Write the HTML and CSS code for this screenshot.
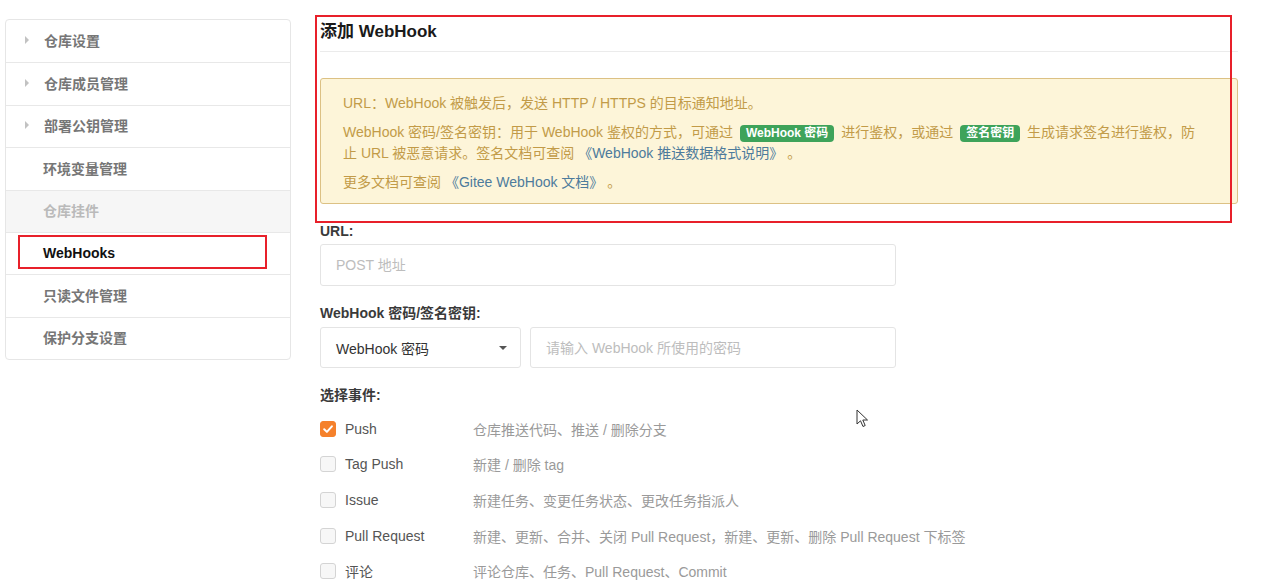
FILE: index.html
```html
<!DOCTYPE html>
<html lang="zh-CN">
<head>
    <meta charset="UTF-8">
    <title>添加 WebHook</title>
    <link rel="stylesheet" href="styles.css">
</head>
<body>
    <div class="page">
        <ul class="side-nav">
            <li class="nav-item"><span class="caret"></span>仓库设置</li>
            <li class="nav-item"><span class="caret"></span>仓库成员管理</li>
            <li class="nav-item"><span class="caret"></span>部署公钥管理</li>
            <li class="nav-item plain">环境变量管理</li>
            <li class="nav-item plain disabled">仓库挂件</li>
            <li class="nav-item plain active">WebHooks</li>
            <li class="nav-item plain">只读文件管理</li>
            <li class="nav-item plain">保护分支设置</li>
        </ul>

        <div class="main">
            <h2 class="page-title">添加 WebHook</h2>

            <div class="notice">
                <p>URL：WebHook 被触发后，发送 HTTP / HTTPS 的目标通知地址。</p>
                <p>WebHook 密码/签名密钥：用于 WebHook 鉴权的方式，可通过 <span class="badge">WebHook 密码</span> 进行鉴权，或通过 <span class="badge">签名密钥</span> 生成请求签名进行鉴权，防止 URL 被恶意请求。签名文档可查阅 <a href="#">《WebHook 推送数据格式说明》</a> 。</p>
                <p>更多文档可查阅 <a href="#">《Gitee WebHook 文档》</a> 。</p>
            </div>

            <div class="field">
                <label class="field-label">URL:</label>
                <input class="text-input url-input" type="text" placeholder="POST 地址">
            </div>

            <div class="field">
                <label class="field-label">WebHook 密码/签名密钥:</label>
                <div class="field-row">
                    <div class="select">WebHook 密码<span class="select-caret"></span></div>
                    <input class="text-input secret-input" type="text" placeholder="请输入 WebHook 所使用的密码">
                </div>
            </div>

            <div class="field">
                <label class="field-label">选择事件:</label>
                <div class="events">
                    <div class="event">
                        <span class="check checked">
                            <svg width="12" height="12" viewBox="0 0 12 12"><path d="M2.2 6.3 L4.9 8.9 L9.9 3.3" fill="none" stroke="#fff" stroke-width="2" stroke-linecap="round" stroke-linejoin="round"/></svg>
                        </span>
                        <span class="event-name">Push</span>
                        <span class="event-desc">仓库推送代码、推送 / 删除分支</span>
                    </div>
                    <div class="event">
                        <span class="check"></span>
                        <span class="event-name">Tag Push</span>
                        <span class="event-desc">新建 / 删除 tag</span>
                    </div>
                    <div class="event">
                        <span class="check"></span>
                        <span class="event-name">Issue</span>
                        <span class="event-desc">新建任务、变更任务状态、更改任务指派人</span>
                    </div>
                    <div class="event">
                        <span class="check"></span>
                        <span class="event-name">Pull Request</span>
                        <span class="event-desc">新建、更新、合并、关闭 Pull Request，新建、更新、删除 Pull Request 下标签</span>
                    </div>
                    <div class="event">
                        <span class="check"></span>
                        <span class="event-name">评论</span>
                        <span class="event-desc">评论仓库、任务、Pull Request、Commit</span>
                    </div>
                </div>
            </div>
        </div>
    </div>

    <!-- annotation marks drawn over the screenshot -->
    <div class="mark mark-main"></div>
    <div class="mark mark-nav"></div>
    <svg class="cursor" width="14" height="20" viewBox="0 0 14 20">
        <path d="M1 1 L1 15 L4.5 11.8 L7 17.5 L9.2 16.5 L6.8 11 L11.5 11 Z" fill="#fff" stroke="#333" stroke-width="1" stroke-linejoin="round"/>
    </svg>
</body>
</html>
```

FILE: styles.css
```css
body {
    margin: 0;
    background: #fff;
    font-family: "Liberation Sans", "Noto Sans CJK SC", sans-serif;
    font-size: 14px;
    color: #333;
}
.page {
    display: flex;
    align-items: flex-start;
    padding: 19px 0 0 5px;
}

/* side nav */
.side-nav {
    list-style: none;
    margin: 0;
    padding: 0;
    width: 286px;
    flex-shrink: 0;
    border: 1px solid #e6e6e6;
    border-radius: 4px;
    box-sizing: border-box;
    margin-right: 29px;
}
.nav-item {
    display: flex;
    align-items: center;
    height: 42.4px;
    box-sizing: border-box;
    padding-left: 19px;
    padding-bottom: 2px;
    color: #767676;
    font-weight: bold;
    border-top: 1px solid #e8e8e8;
}
.nav-item:first-child { border-top: none; }
.nav-item.plain { padding-left: 37px; }
.nav-item.disabled { background: #f6f6f6; color: #bababa; }
.nav-item.active { color: #111; }
.caret {
    width: 0;
    height: 0;
    border-top: 4px solid transparent;
    border-bottom: 4px solid transparent;
    border-left: 4px solid #c2c2c2;
    margin-right: 15px;
}

/* main column */
.main {
    width: 918px;
}
.page-title {
    margin: 0;
    padding: 1px 0 7px;
    font-size: 17px;
    line-height: 24px;
    color: #1a1a1a;
    border-bottom: 1px solid #ebebeb;
}
.notice {
    margin-top: 26px;
    background: #fdf5d9;
    border: 1px solid #dcc184;
    border-radius: 3px;
    padding: 14px 32px 10px 22px;
    color: #c29b48;
    line-height: 21px;
}
.notice p { margin: 0 0 8px; }
.notice p:last-child { margin-bottom: 0; }
.notice a { color: #4d7b9c; text-decoration: none; }
.badge {
    display: inline-block;
    background: #3ea35a;
    color: #fff;
    font-size: 12px;
    font-weight: bold;
    line-height: 17px;
    padding: 0 6px;
    margin: 0 3px;
    border-radius: 4px;
}

/* form */
.field { margin-top: 17px; }
.field-label {
    display: block;
    font-weight: bold;
    line-height: 20px;
    margin-bottom: 3px;
    color: #3a3a3a;
}
.text-input {
    box-sizing: border-box;
    height: 42px;
    border: 1px solid #e4e4e4;
    border-radius: 3px;
    padding: 0 15px;
    font: inherit;
    color: #333;
    outline: none;
}
.text-input::placeholder { color: #bdbdbd; }
.url-input { width: 576px; display: block; }
.field-row {
    display: flex;
    gap: 9px;
    margin-top: 4px;
}
.select {
    box-sizing: border-box;
    width: 201px;
    height: 41px;
    border: 1px solid #e4e4e4;
    border-radius: 3px;
    display: flex;
    align-items: center;
    justify-content: space-between;
    padding: 0 13px 0 15px;
    color: #333;
}
.select-caret {
    width: 0;
    height: 0;
    border-left: 4px solid transparent;
    border-right: 4px solid transparent;
    border-top: 4px solid #555;
}
.secret-input { width: 366px; height: 41px; }

.events { margin-top: 6px; }
.event {
    display: flex;
    align-items: center;
    height: 35.6px;
}
.check {
    box-sizing: border-box;
    width: 16px;
    height: 16px;
    border: 1px solid #d4d4d4;
    border-radius: 3px;
    background: #f7f7f7;
    margin-right: 9px;
    display: flex;
    align-items: center;
    justify-content: center;
}
.check.checked { background: #f5812c; border-color: #f5812c; }
.event-name { width: 128px; color: #555; }
.event-desc { color: #9a9a9a; }

/* annotations */
.mark {
    position: absolute;
    border: 2px solid #e8202a;
    box-sizing: border-box;
}
.mark-main { left: 315px; top: 15px; width: 917px; height: 208px; }
.mark-nav { left: 18px; top: 235px; width: 249px; height: 34px; }
.cursor { position: absolute; left: 856px; top: 409px; }
```
